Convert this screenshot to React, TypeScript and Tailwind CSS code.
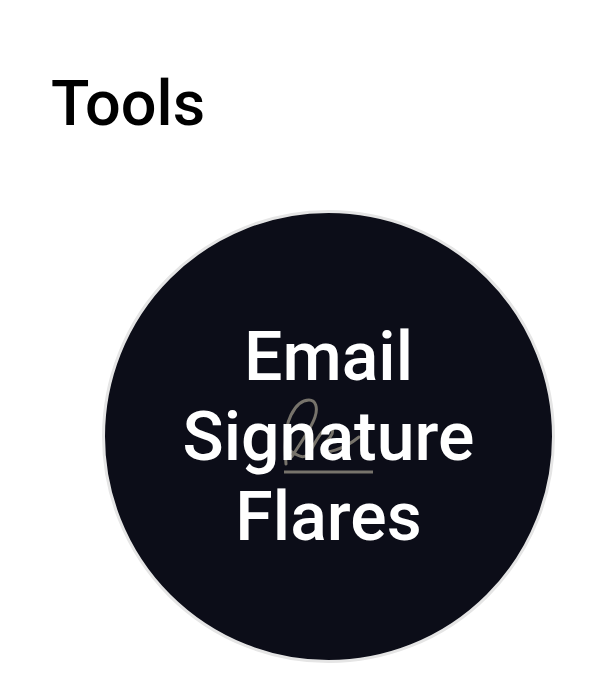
export default function App(): React.ReactElement {
  return (
    <main className="min-h-[698px] bg-white pl-[51px] pr-[49px] pt-[66px] font-['Roboto',sans-serif]">
      <h1 className="text-[63px] leading-[75px] font-medium text-black">Tools</h1>

      <div className="mt-[69px] flex justify-end">
        <div className="relative flex size-[453px] items-center justify-center rounded-full border-[3px] border-[#e5e5e5] bg-[#0c0d18]">
          <svg width="92" height="80" viewBox="0 0 92 80" fill="none" stroke="#77736b" strokeLinecap="round" strokeLinejoin="round">
            <path
              d="M3 67C1 45 3 28 8 18C13 8 20 3 26 3C33 3 35 11 32 20C28 32 16 48 10 58C7 63 5 60 7 54C12 56 20 65 27 55C32 46 36 37 42 32C47 28 51 30 49 37C46 45 38 45 39 52C41 58 60 53 76 40"
              strokeWidth="3"
            />
            <path d="M1 75H90" strokeWidth="3" strokeLinecap="butt" />
          </svg>
          <p className="absolute inset-x-0 top-1/2 -translate-y-1/2 text-center text-[68px] leading-[80px] font-medium text-white">
            Email
            <br />
            Signature
            <br />
            Flares
          </p>
        </div>
      </div>
    </main>
  );
}
